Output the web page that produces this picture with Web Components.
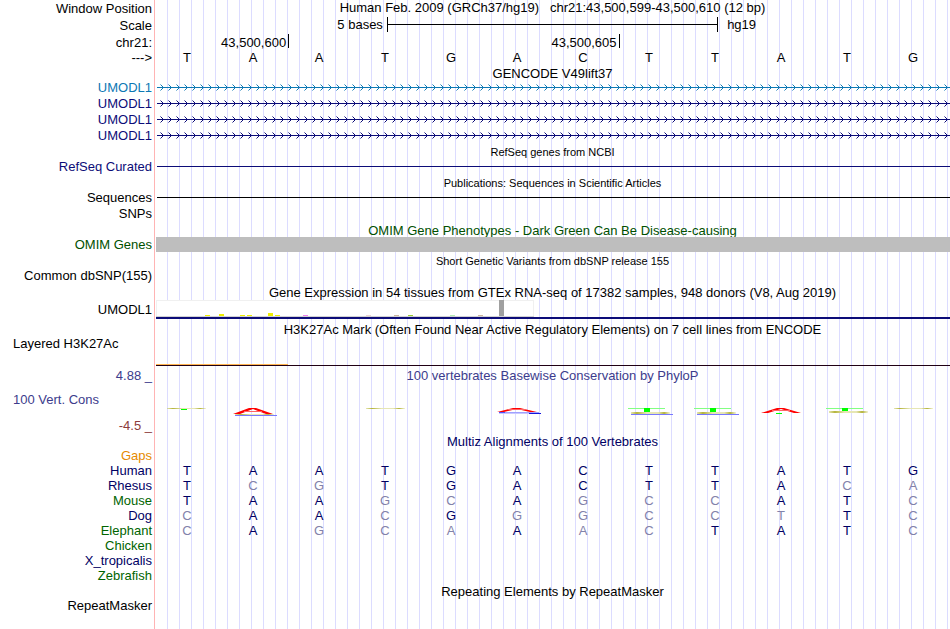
<!DOCTYPE html>
<html lang="en">
<head>
<meta charset="utf-8">
<title>Genome tracks</title>
<style>
  body {
    margin: 0;
    background: #fff;
    font-family: "Liberation Sans", Arial, sans-serif;
    font-size: 13px;
    color: #000;
  }
</style>
</head>
<body>
<genome-view>
  <track-row label="Window Position" size="tall"><track-caption>Human Feb. 2009 (GRCh37/hg19) &nbsp; chr21:43,500,599-43,500,610 (12 bp)</track-caption></track-row>
  <track-row label="Scale" size="tall"><scale-bar><span slot="size">5 bases</span><span slot="db">hg19</span></scale-bar></track-row>
  <track-row label="chr21:" size="tall"><position-ruler marks="2:43,500,600 7:43,500,605"></position-ruler></track-row>
  <track-row label="--->" size="bases"><base-row bases="TAATGACTTATG"></base-row></track-row>

  <track-title style="--height: 14px">GENCODE V49lift37</track-title>
  <track-row label="UMODL1" color="#0c78b4"><gene-line arrows></gene-line></track-row>
  <track-row label="UMODL1" color="#0c0c78"><gene-line arrows></gene-line></track-row>
  <track-row label="UMODL1" color="#0c0c78"><gene-line arrows></gene-line></track-row>
  <track-row label="UMODL1" color="#0c0c78"><gene-line arrows></gene-line></track-row>

  <track-title small>RefSeq genes from NCBI</track-title>
  <track-row label="RefSeq Curated" color="#0c0c78"><gene-line></gene-line></track-row>

  <track-title small>Publications: Sequences in Scientific Articles</track-title>
  <track-row label="Sequences"><gene-line></gene-line></track-row>
  <track-row label="SNPs"></track-row>

  <track-title style="color: #005000">OMIM Gene Phenotypes - Dark Green Can Be Disease-causing</track-title>
  <track-row label="OMIM Genes" color="#005000"><gene-band></gene-band></track-row>

  <track-title small>Short Genetic Variants from dbSNP release 155</track-title>
  <track-row label="Common dbSNP(155)"></track-row>

  <track-title>Gene Expression in 54 tissues from GTEx RNA-seq of 17382 samples, 948 donors (V8, Aug 2019)</track-title>
  <track-row label="UMODL1" size="expression"><expression-chart></expression-chart></track-row>

  <track-title style="--height: 16px">H3K27Ac Mark (Often Found Near Active Regulatory Elements) on 7 cell lines from ENCODE</track-title>
  <track-row label="Layered H3K27Ac" size="signal" align="left"><signal-line></signal-line></track-row>

  <track-title style="--height: 16px; color: #3c3c8c" label="4.88 _">100 vertebrates Basewise Conservation by PhyloP</track-title>
  <track-row label="100 Vert. Cons" size="logo" align="left" color="#3c3c8c" low="-4.5 _"><conservation-logo></conservation-logo></track-row>

  <track-title style="color: #000064">Multiz Alignments of 100 Vertebrates</track-title>
  <track-row label="Gaps" size="short" color="#e68a00"></track-row>
  <track-row label="Human" size="short" color="#000064"><base-row bases="TAATGACTTATG"></base-row></track-row>
  <track-row label="Rhesus" size="short" color="#000064"><base-row bases="TcgTGACTTAca"></base-row></track-row>
  <track-row label="Mouse" size="short" color="#006400"><base-row bases="TAAgcAgccATc"></base-row></track-row>
  <track-row label="Dog" size="short" color="#000064"><base-row bases="cAAcGggcctTc"></base-row></track-row>
  <track-row label="Elephant" size="short" color="#006400"><base-row bases="cAgcaAacTATc"></base-row></track-row>
  <track-row label="Chicken" size="short" color="#006400"></track-row>
  <track-row label="X_tropicalis" size="short" color="#000064"></track-row>
  <track-row label="Zebrafish" size="short" color="#006400"></track-row>

  <track-title>Repeating Elements by RepeatMasker</track-title>
  <track-row label="RepeatMasker"></track-row>
</genome-view>

<script>
function attach(el, html) {
  const template = document.createElement('template');
  template.innerHTML = html;
  el.attachShadow({ mode: 'open' }).appendChild(template.content.cloneNode(true));
}

class GenomeView extends HTMLElement {
  constructor() {
    super();
    attach(this, `
<style>
  :host {
    --label-width: 155px;
    display: flex;
    flex-direction: column;
    min-height: 100vh;
    overflow: hidden;
    background:
      linear-gradient(#ffb4b4, #ffb4b4) 154px 0 / 1px 100% no-repeat,
      repeating-linear-gradient(90deg, #dcdcff 0 1px, transparent 1px 12px) 167px 0 no-repeat;
  }
</style>
<slot></slot>`);
  }
}

class TrackRow extends HTMLElement {
  constructor() {
    super();
    const low = this.getAttribute('low');
    attach(this, `
<style>
  :host {
    display: grid;
    grid-template-columns: var(--label-width) minmax(0, 1fr);
    min-height: 16px;
    line-height: 15px;
  }
  :host([size="tall"]) { min-height: 17px; line-height: 17px; }
  :host([size="bases"]) { min-height: 15px; line-height: 13px; }
  :host([size="short"]) { min-height: 15px; }
  :host([size="expression"]) { min-height: 21px; line-height: 21px; }
  :host([size="signal"]) { min-height: 30px; }
  :host([size="logo"]) { min-height: 51px; }
  .label {
    display: flex;
    flex-direction: column;
    text-align: right;
    padding-right: 3px;
    white-space: nowrap;
  }
  :host([align="left"]) .name { text-align: left; padding-left: 13px; }
  :host([size="logo"]) .label { justify-content: space-between; padding-top: 10px; }
  .low { color: #8c3c3c; }
  .data { display: grid; }
</style>
<div class="label"><span class="name"></span>${low ? '<span class="low"></span>' : ''}</div>
<div class="data"><slot></slot></div>`);
    this.shadowRoot.querySelector('.name').textContent = this.getAttribute('label');
    if (low) {
      this.shadowRoot.querySelector('.low').textContent = low;
    }
    if (this.hasAttribute('color')) {
      this.style.color = this.getAttribute('color');
    }
  }
}

class TrackTitle extends HTMLElement {
  constructor() {
    super();
    attach(this, `
<style>
  :host {
    display: grid;
    grid-template-columns: var(--label-width) minmax(0, 1fr);
    align-items: end;
    min-height: var(--height, 15px);
    line-height: 13px;
    white-space: nowrap;
  }
  .label { text-align: right; padding-right: 3px; }
  .title { text-align: center; }
  :host([small]) .title { font-size: 11px; }
</style>
<div class="label"></div>
<div class="title"><slot></slot></div>`);
    this.shadowRoot.querySelector('.label').textContent = this.getAttribute('label') || '';
  }
}

class TrackCaption extends HTMLElement {
  constructor() {
    super();
    attach(this, `
<style>
  :host { display: block; text-align: center; line-height: 15px; white-space: nowrap; }
</style>
<slot></slot>`);
  }
}

class ScaleBar extends HTMLElement {
  constructor() {
    super();
    attach(this, `
<style>
  :host {
    display: grid;
    grid-template-columns: 7fr 10fr 7fr;
    line-height: 15px;
  }
  .size { text-align: right; padding-right: 4px; }
  .db { padding-left: 9px; }
  .bar {
    height: 15px;
    border: solid #000;
    border-width: 0 1px;
    background: linear-gradient(#000, #000) 0 7px / 100% 1px no-repeat;
  }
</style>
<div class="size"><slot name="size"></slot></div>
<div class="bar"></div>
<div class="db"><slot name="db"></slot></div>`);
  }
}

// marks is a list of column:label, the tick stands at the right edge of the column
class PositionRuler extends HTMLElement {
  constructor() {
    super();
    attach(this, `
<style>
  :host {
    display: grid;
    grid-template-columns: repeat(12, 1fr);
    padding-left: 2px;
  }
  div {
    display: flex;
    justify-content: flex-end;
    height: 14px;
    padding-right: 2px;
    border-right: 1px solid #000;
    grid-row: 1;
  }
</style>`);
    this.getAttribute('marks').split(' ').forEach(mark => {
      const [column, label] = mark.split(':');
      const div = document.createElement('div');
      div.style.gridColumn = `${column - 1} / span 2`;
      div.textContent = label;
      this.shadowRoot.appendChild(div);
    });
  }
}

// lower case letters are the bases that differ from human
class BaseRow extends HTMLElement {
  constructor() {
    super();
    attach(this, `
<style>
  :host {
    display: grid;
    grid-template-columns: repeat(12, 1fr);
    margin-left: -1px;
    padding-right: 4px;
    text-align: center;
  }
  :host([aligned]) { color: #000064; }
  .diff { color: #8282aa; }
</style>`);
    const row = this.parentElement;
    this.toggleAttribute('aligned', !!row && row.getAttribute('size') === 'short');
    [...this.getAttribute('bases')].forEach(base => {
      const span = document.createElement('span');
      span.textContent = base.toUpperCase();
      if (base !== base.toUpperCase()) {
        span.className = 'diff';
      }
      this.shadowRoot.appendChild(span);
    });
  }
}

class GeneLine extends HTMLElement {
  constructor() {
    super();
    attach(this, `
<style>
  :host { display: block; height: 16px; padding-left: 2px; }
  svg { display: block; width: 100%; height: 16px; }
</style>
<svg aria-hidden="true">
  <defs>
    <pattern id="arrow" width="8" height="16" patternUnits="userSpaceOnUse">
      <path d="M5 6h1v1h-1zM5 8h1v1h-1zM4 5h1v1h-1zM4 9h1v1h-1z" fill="currentColor"/>
      <path d="M3 4h1v1h-1zM3 10h1v1h-1z" fill="currentColor" opacity=".5"/>
    </pattern>
  </defs>
  ${this.hasAttribute('arrows') ? '<rect width="100%" height="16" fill="url(#arrow)"/>' : ''}
  <rect y="7" width="100%" height="1" fill="currentColor"/>
</svg>`);
  }
}

class GeneBand extends HTMLElement {
  constructor() {
    super();
    attach(this, `
<style>
  :host { display: block; height: 15px; margin-left: 1px; background: #bebebe; }
</style>`);
  }
}

class ExpressionChart extends HTMLElement {
  constructor() {
    super();
    const bars = [
      [49, 1, '#eeee00'], [63, 2, '#eeee00'], [84, 1, '#eeee00'], [91, 1, '#eeee00'],
      [112, 3, '#eeee00'], [119, 1, '#eeee00'], [147, 1, '#ee82ee'], [210, 1, '#eed5d2'],
      [238, 1, '#cdb79e'], [252, 1, '#9acd32'], [294, 1, '#b4eeb4'], [322, 1, '#cdb79e'],
      [343, 16, '#a0a0a0']
    ];
    attach(this, `
<style>
  :host { display: block; margin-left: 1px; padding-top: 1px; }
  svg { display: block; }
  .gene { height: 2px; background: #0c0c78; }
</style>
<svg width="378" height="17" aria-hidden="true">
  <rect x=".5" y=".5" width="377" height="16" fill="#fff" stroke="#f0f0f0"/>
  <rect y="16" width="378" height="1" fill="#d2d2d2"/>
  ${bars.map(([x, h, fill]) => `<rect x="${x}" y="${16 - h}" width="5" height="${h}" fill="${fill}"/>`).join('')}
</svg>
<div class="gene"></div>`);
  }
}

class SignalLine extends HTMLElement {
  constructor() {
    super();
    attach(this, `
<style>
  :host {
    display: flex;
    flex-direction: column;
    justify-content: flex-end;
    margin-left: 1px;
  }
  .signal { width: calc(100% / 6); height: 1px; background: #ffb450; }
  .axis { height: 1px; background: #200014; }
</style>
<div class="signal"></div>
<div class="axis"></div>`);
  }
}

class ConservationLogo extends HTMLElement {
  constructor() {
    super();
    const olive = (x, y, h = 1) => `<rect x="${x}" y="${y}" width="39" height="${h}" fill="url(#olive)"/>`;
    const blue = y => `<rect x="6" y="${y}" width="42" height="1" fill="#7878ff"/>`;
    const green = (x, y, h) => `<rect x="${x}" y="${y}" width="6" height="${h}" fill="#00ff00"/>`;
    const stem = '<rect x="3" y="4" width="37" height="1" fill="#82ff82"/>';
    // a flattened letter A: two legs and a thin cross bar
    const letterA = bottom => `<path d="M4 ${bottom}L20 4H27L44 ${bottom}H37L24 5L11 ${bottom}Z" fill="#ff0000"/>
      <path d="M15 ${bottom - 2.5}H33" stroke="#ff6464" stroke-width="1"/>`;
    const cells = [
      olive(4, 4) + green(18, 5, 1),
      olive(6, 10) + blue(11) + letterA(10),
      '',
      olive(5, 4),
      '',
      '<rect x="6" y="8" width="40" height="1" fill="#a0a0ff"/><rect x="6" y="8" width="6" height="1" fill="#5050ff"/><rect x="36" y="9" width="12" height="1" fill="#1414dc"/><rect x="6" y="9" width="30" height="1" fill="#c8c8ff"/>' + letterA(8),
      '',
      stem + olive(6, 8, 2) + blue(10) + green(19, 4, 4),
      stem + olive(6, 8, 2) + blue(10) + green(19, 4, 4),
      letterA(9) + green(19, 9, 1),
      stem + olive(6, 7, 2) + green(19, 4, 3),
      olive(5, 4)
    ];
    attach(this, `
<style>
  :host {
    display: grid;
    grid-template-columns: repeat(12, 1fr);
    justify-items: center;
    margin-left: -1px;
    padding: 22px 4px 0 0;
  }
  svg { display: block; }
</style>
${cells.map(cell => `<svg width="48" height="16" aria-hidden="true">
  <linearGradient id="olive">
    <stop offset="0" stop-color="#bebe3c" stop-opacity=".4"/>
    <stop offset=".15" stop-color="#b4b43c"/>
    <stop offset=".4" stop-color="#e6e6b4"/>
    <stop offset=".7" stop-color="#e6e6b4"/>
    <stop offset=".85" stop-color="#b4b43c"/>
    <stop offset="1" stop-color="#bebe3c" stop-opacity=".2"/>
  </linearGradient>${cell}</svg>`).join('')}`);
  }
}

customElements.define('genome-view', GenomeView);
customElements.define('track-row', TrackRow);
customElements.define('track-title', TrackTitle);
customElements.define('track-caption', TrackCaption);
customElements.define('scale-bar', ScaleBar);
customElements.define('position-ruler', PositionRuler);
customElements.define('base-row', BaseRow);
customElements.define('gene-line', GeneLine);
customElements.define('gene-band', GeneBand);
customElements.define('expression-chart', ExpressionChart);
customElements.define('signal-line', SignalLine);
customElements.define('conservation-logo', ConservationLogo);
</script>
</body>
</html>
